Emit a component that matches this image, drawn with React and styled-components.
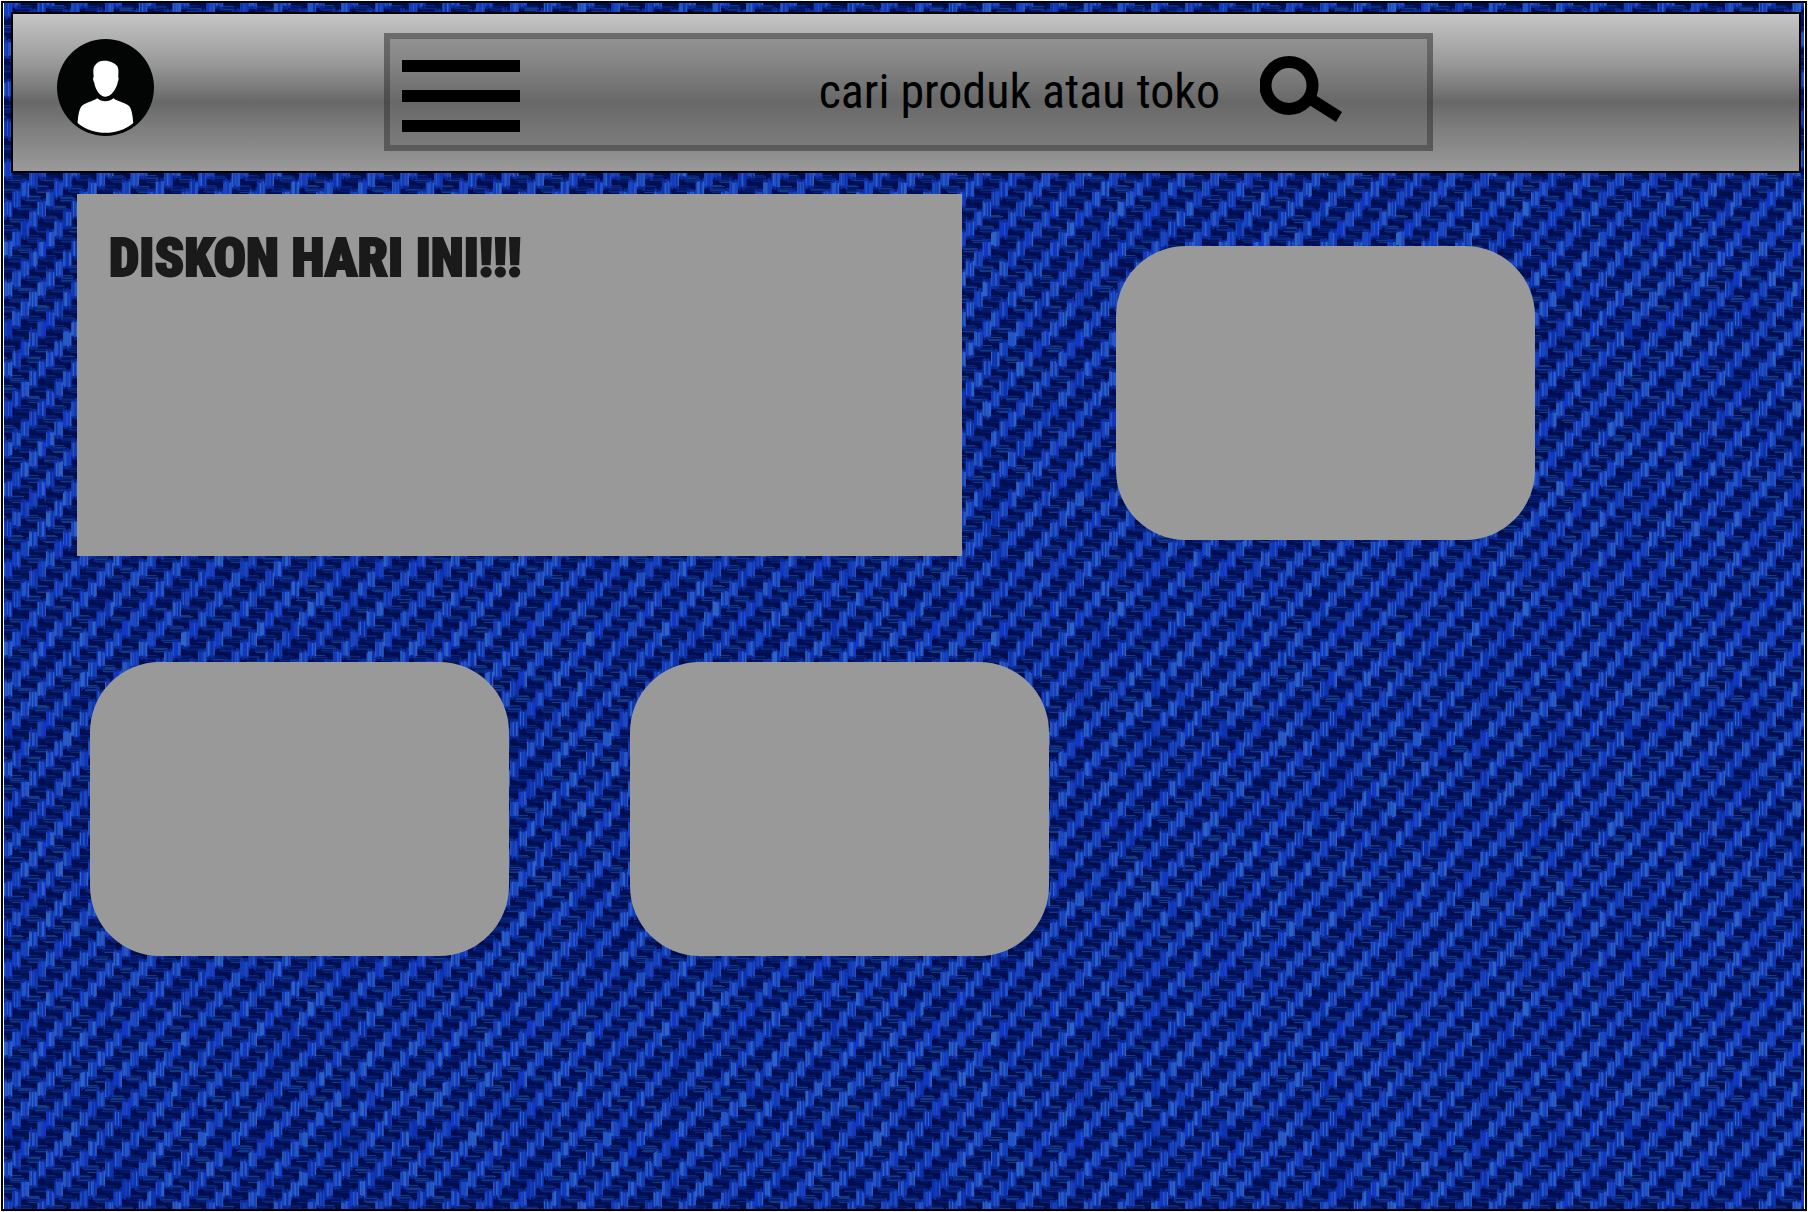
import React from "react";
import styled, { createGlobalStyle } from "styled-components";

const GlobalStyle = createGlobalStyle`
  *, *::before, *::after { box-sizing: border-box; }
  body { margin: 0; background: #f4f8f8; font-family: "Roboto Condensed", Roboto, sans-serif; }
`;

/* ---- denim weave ---- */
const COLS = 48;
const TILE_W = 405;
const TILE_H = 400;
const PITCH = TILE_W / COLS;
const WARP = ["#0c32b0", "#143cb8", "#1a46c0", "#2254c6", "#2c62c8", "#1036cc"];
const WARP_END = ["#08268c", "#0a2c9c", "#0e30a4"];
const WEFT = ["#00125c", "#001564", "#04196c", "#061f74", "#0a2878", "#143a84"];

function weave() {
  let seed = 20117;
  const rnd = () => {
    seed = (seed * 1664525 + 1013904223) % 4294967296;
    return seed / 4294967296;
  };
  const pick = (list) => list[Math.floor(rnd() * list.length)];
  const layers = { weft: {}, shade: {}, ends: {}, warp: {} };
  const add = (layer, fill, x, y, w, h) => {
    const xs = [x];
    if (x < 0) xs.push(x + TILE_W);
    if (x + w > TILE_W) xs.push(x - TILE_W);
    const ys = [y];
    if (y < 0) ys.push(y + TILE_H);
    if (y + h > TILE_H) ys.push(y - TILE_H);
    xs.forEach((px) =>
      ys.forEach((py) => {
        layers[layer][fill] =
          (layers[layer][fill] || "") +
          `M${px.toFixed(1)} ${py.toFixed(1)}h${w.toFixed(1)}v${h.toFixed(1)}h${(-w).toFixed(1)}z`;
      })
    );
  };
  for (let c = 0; c < COLS; c += 1) {
    for (let r = 0; r < 10; r += 1) {
      const cx = c * PITCH + 4;
      const cy = (((6 - 10 * c) % 40) + 40) % 40 + r * 40;
      const lift = Math.floor(rnd() * 2);
      for (let s = 0; s < 8; s += 1) {
        const inset = s === 0 || s === 7 ? 3 : rnd() * 2;
        add("weft", WEFT[lift + Math.floor(rnd() * 5)], cx + 9 + inset, cy - 4 + s, 16 - inset * 2, 1);
      }
      add("shade", "#000838", cx - 5, cy - 5, 1, 11);
      add("shade", "#000838", cx + 4, cy - 6, 1, 11);
      const tone = Math.floor(rnd() * 2);
      for (let s = 0; s < 6; s += 1) {
        const x = cx - 4.2 + s * 1.4;
        const top = 6 + rnd() * 2;
        const bottom = 6 + rnd() * 2;
        const tail = 2 + rnd() * 2;
        add("ends", pick(WARP_END), x, cy - top - tail, 1.5, top + bottom + tail * 2);
        add("warp", WARP[tone + Math.floor(rnd() * 5)], x, cy - top, 1.5, top + bottom);
      }
    }
  }
  return Object.values(layers).flatMap((layer) => Object.entries(layer));
}
const THREADS = weave();

const Frame = styled.div`
  min-height: 100vh;
  padding: 1px;
  display: flex;
`;

const Canvas = styled.div`
  position: relative;
  isolation: isolate;
  flex: 1;
  border: 2px solid #000;
  padding: 0 1px;
`;

const Fabric = styled.svg`
  position: absolute;
  inset: 0 1px;
  width: calc(100% - 2px);
  height: 100%;
  z-index: -1;
`;

const Header = styled.header`
  display: flex;
  align-items: flex-start;
  gap: 230px;
  margin: 9px 3px 0 7px;
  padding: 19px 366px 20px 44px;
  border: 2px solid #000;
  background: linear-gradient(#c6c6c6, #989898 32%, #686868 56%, #7f7f7f 74%, #9a9a9a);
`;

const IconButton = styled.button`
  display: block;
  flex: none;
  padding: 0;
  border: 0;
  background: none;
  color: #000;
  cursor: pointer;
  svg { display: block; }
`;

const Profile = styled(IconButton)`
  margin-top: 6px;
`;

const SearchBar = styled.form`
  flex: 1;
  min-width: 0;
  height: 118px;
  display: flex;
  align-items: flex-start;
  padding: 17px 85px 0 12px;
  border: 6px solid rgba(0, 0, 0, 0.27);
  background: rgba(104, 104, 104, 0.42);
`;

const Menu = styled(IconButton)`
  display: grid;
  gap: 18px;
  width: 118px;
  padding-top: 4px;
`;

const Bar = styled.span`
  height: 12px;
  background: #000;
`;

const Query = styled.input`
  flex: 1;
  min-width: 0;
  height: 70px;
  margin-right: 40px;
  padding: 0;
  border: 0;
  outline: 0;
  background: none;
  color: #000;
  font: 400 48px "Roboto Condensed", Roboto, sans-serif;
  text-align: right;
  &::placeholder { color: #000; opacity: 1; }
`;

const Row = styled.section`
  display: grid;
  align-items: end;
`;

const Featured = styled(Row)`
  grid-template-columns: 885fr 419fr;
  column-gap: 154px;
  padding: 21px 269px 0 73px;
`;

const Products = styled(Row)`
  grid-template-columns: 1fr 1fr;
  column-gap: 121px;
  padding: 106px 755px 0 86px;
`;

const Banner = styled.article`
  min-height: 362px;
  padding: 24px 32px;
  background: #999;
`;

const Title = styled.h1`
  margin: 0;
  color: #1a1a1a;
  font: 900 54px/80px "Roboto Condensed", Roboto, sans-serif;
  -webkit-text-stroke: 2px #1a1a1a;
  white-space: nowrap;
`;

const Card = styled.article`
  height: 294px;
  margin-bottom: ${(p) => (p.$raised ? "16px" : "0")};
  border-radius: 70px;
  background: #999;
`;

export default function App() {
  return (
    <Frame>
      <GlobalStyle />
      <Canvas>
        <Fabric aria-hidden="true">
          <defs>
            <pattern id="denim" width={TILE_W} height={TILE_H} patternUnits="userSpaceOnUse">
              <rect width={TILE_W} height={TILE_H} fill="#000e50" />
              {THREADS.map(([fill, d], i) => (
                <path key={i} d={d} fill={fill} />
              ))}
            </pattern>
          </defs>
          <rect width="100%" height="100%" fill="url(#denim)" />
        </Fabric>
        <Header>
          <Profile type="button" aria-label="Profil">
            <svg width="97" height="97" viewBox="0 0 97 97">
              <circle cx="48.5" cy="48.5" r="48.5" fill="#030504" />
              <path
                fill="#fff"
                d="M47 21.7C53 21.500 58 24 60.500 27.500C61.800 30 61.500 34 61.200 38C62 39 61.600 41 60.800 43C59.500 50 54 57.700 48.500 57.700C43 57.700 38.500 51 37.200 43.500C35.800 41 35.800 39 36.700 37.500C36.200 33 36 29.500 37.500 27C39.500 23.500 43 21.700 47 21.700Z"
              />
              <path
                fill="#fff"
                d="M40.300 59.200C44.500 63.200 52 63.200 56.500 59.200C61 63 68.500 63 72.500 67.600C75 71.500 75.800 78 76.300 84C68 91 58 93.800 48.500 93.800C39 93.800 29 91 20.600 84C21 78 21.800 71.500 24.300 67.600C27 63.500 35 63 40.300 59.200Z"
              />
            </svg>
          </Profile>
          <SearchBar role="search" onSubmit={(e) => e.preventDefault()}>
            <Menu type="button" aria-label="Menu">
              <Bar />
              <Bar />
              <Bar />
            </Menu>
            <Query type="text" aria-label="cari produk atau toko" placeholder="cari produk atau toko" />
            <IconButton type="submit" aria-label="Cari">
              <svg width="82" height="80" viewBox="0 0 82 80">
                <circle cx="29" cy="29.500" r="23.500" fill="none" stroke="#000" strokeWidth="12" />
                <path d="M56 39.500L82 56L76 66L50 49.500Z" />
              </svg>
            </IconButton>
          </SearchBar>
        </Header>
        <main>
          <Featured>
            <Banner>
              <Title>DISKON HARI INI!!!</Title>
            </Banner>
            <Card $raised />
          </Featured>
          <Products>
            <Card />
            <Card />
          </Products>
        </main>
      </Canvas>
    </Frame>
  );
}
